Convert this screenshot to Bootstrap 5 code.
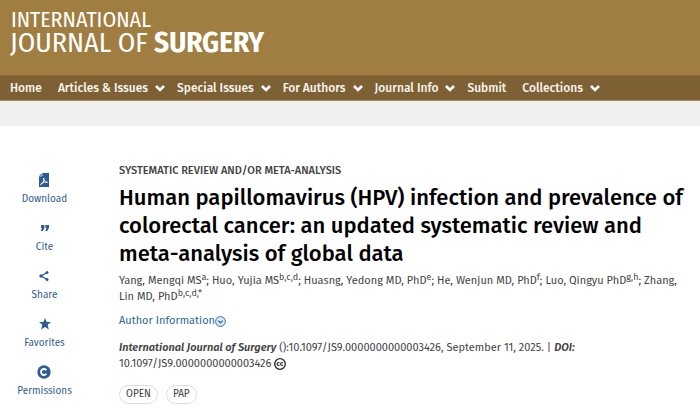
<!DOCTYPE html>
<html lang="en">
<head>
<meta charset="utf-8">
<meta name="viewport" content="width=device-width, initial-scale=1">
<title>International Journal of Surgery</title>
<link href="https://cdn.jsdelivr.net/npm/bootstrap@5.3.0/dist/css/bootstrap.min.css" rel="stylesheet">
<style>
  body { font-family: "Fira Sans", "Noto Sans", Roboto, sans-serif; font-size: 11px; line-height: 16px; color: #444; background: #fff; }
  a { color: #2d6896; text-decoration: none; }
  .masthead { background: #a07d41; padding: 10px 10px 20px; }
  .brand { color: #fff; font-family: "Fira Sans Condensed", "Open Sans Condensed", "Fira Sans", sans-serif; font-weight: 400; }
  .brand:hover { color: #fff; }
  .brand-top { font-size: 22px; line-height: 20px; padding-left: 1px; }
  .brand-main { font-size: 28px; line-height: 25px; }
  .brand-main strong { font-size: 29px; font-weight: 700; }
  .site-nav { background: #7d6033; border-top: 1px solid #8c6b38; border-bottom: 1px solid #a38a60; padding: 0 10px; }
  .site-nav ul { column-gap: 16px; }
  .site-nav .has-menu { margin-right: -4px; }
  .site-nav a, .site-nav button { color: #f8f5ee; font-size: 12px; font-weight: 500; line-height: 24px; }
  .site-nav a { display: block; }
  .site-nav button { column-gap: 7px; }
  .ad-strip { background: #efefef; height: 25px; }
  .tools { width: 89px; padding-top: 46px; }
  .tools ul { gap: 12px; }
  .tools button { color: #2f5d93; font-size: 10px; line-height: 18px; }
  .tools svg { fill: #2f5d93; height: 18px; }
  .article { padding: 37px 14px 0 30px; }
  .kicker { font-size: 11px; font-weight: 500; line-height: 16px; }
  .headline { font-size: 22px; font-weight: 500; line-height: 28px; color: #000; margin: 5px 0; }
  .authors { margin-bottom: 8px; }
  .citation { margin: 11px 0 13px; }
  .prose sup { font-size: 9px; line-height: 1; top: -4px; vertical-align: baseline; }
  .prose strong { font-weight: 600; }
  .access { border: 1px solid #ddd; font-size: 10px; line-height: 17px; padding: 0 6px; }
</style>
<script src="https://cdn.jsdelivr.net/npm/bootstrap@5.3.0/dist/js/bootstrap.bundle.min.js"></script>
</head>
<body>
<header>
  <div class="masthead">
    <a class="brand d-block" href="#"><span class="brand-top d-block">INTERNATIONAL</span><span class="brand-main d-block">JOURNAL OF <strong>SURGERY</strong></span></a>
  </div>
  <nav class="site-nav" aria-label="Main">
    <ul class="list-unstyled d-flex flex-wrap m-0">
      <li><a href="#">Home</a></li>
      <li class="has-menu"><button class="border-0 bg-transparent p-0 d-flex align-items-center" type="button">Articles &amp; Issues <svg width="10" height="7" viewBox="0 0 10 7" fill="none" stroke="#fff" stroke-width="2.5" aria-hidden="true"><path d="M1 1l4 4 4-4"/></svg></button></li>
      <li class="has-menu"><button class="border-0 bg-transparent p-0 d-flex align-items-center" type="button">Special Issues <svg width="10" height="7" viewBox="0 0 10 7" fill="none" stroke="#fff" stroke-width="2.5" aria-hidden="true"><path d="M1 1l4 4 4-4"/></svg></button></li>
      <li class="has-menu"><button class="border-0 bg-transparent p-0 d-flex align-items-center" type="button">For Authors <svg width="10" height="7" viewBox="0 0 10 7" fill="none" stroke="#fff" stroke-width="2.5" aria-hidden="true"><path d="M1 1l4 4 4-4"/></svg></button></li>
      <li class="has-menu"><button class="border-0 bg-transparent p-0 d-flex align-items-center" type="button">Journal Info <svg width="10" height="7" viewBox="0 0 10 7" fill="none" stroke="#fff" stroke-width="2.5" aria-hidden="true"><path d="M1 1l4 4 4-4"/></svg></button></li>
      <li><a href="#">Submit</a></li>
      <li><button class="border-0 bg-transparent p-0 d-flex align-items-center" type="button">Collections <svg width="10" height="7" viewBox="0 0 10 7" fill="none" stroke="#fff" stroke-width="2.5" aria-hidden="true"><path d="M1 1l4 4 4-4"/></svg></button></li>
    </ul>
  </nav>
  <div class="ad-strip"></div>
</header>
<div class="d-flex">
  <aside class="tools flex-shrink-0" aria-label="Article tools">
    <ul class="list-unstyled d-flex flex-column align-items-center m-0">
      <li><button class="border-0 bg-transparent p-0 d-flex flex-column align-items-center" type="button"><svg width="12" viewBox="0 0 12 18" aria-hidden="true"><path d="M4 1h7v14H1V4z"/><path d="M1 4h3V1" fill="none" stroke="#fff" stroke-width=".7"/><path d="M5.600 6c1 2.400-.9 5.300-3 6.800-.4-1.600 4.600-3.500 7-2.500-1 1.200-3.800-1.300-4-4.300z" fill="none" stroke="#fff" stroke-width=".9"/></svg>Download</button></li>
      <li><button class="border-0 bg-transparent p-0 d-flex flex-column align-items-center" type="button"><svg width="10" viewBox="0 0 10 18" aria-hidden="true"><path d="M1 5h3.500v3L2.800 11H.8L2 8H1zM5.500 5H9v3l-1.700 3h-2l1.200-3h-1z"/></svg>Cite</button></li>
      <li><button class="border-0 bg-transparent p-0 d-flex flex-column align-items-center" type="button"><svg width="10" viewBox="0 0 10 18" aria-hidden="true"><path d="M8 4.500L2 8l6 3.500" fill="none" stroke="#2f5d93" stroke-width="1.300"/><circle cx="8" cy="4.500" r="1.500"/><circle cx="2" cy="8" r="1.700"/><circle cx="8" cy="11.500" r="1.500"/></svg>Share</button></li>
      <li><button class="border-0 bg-transparent p-0 d-flex flex-column align-items-center" type="button"><svg width="12" viewBox="0 0 12 18" aria-hidden="true"><path d="M6 2l1.700 4H12L8.700 8.700 9.800 13.500 6 11l-3.800 2.500 1.100-4.800L0 6h4.300z"/></svg>Favorites</button></li>
      <li><button class="border-0 bg-transparent p-0 d-flex flex-column align-items-center" type="button"><svg width="14" viewBox="0 0 14 18" aria-hidden="true"><circle cx="7" cy="8" r="6.700"/><path d="M9.400 6.200a3 3 0 1 0 0 3.600" fill="none" stroke="#fff" stroke-width="1.800"/></svg>Permissions</button></li>
    </ul>
  </aside>
  <main class="article flex-grow-1">
    <div class="kicker">SYSTEMATIC REVIEW AND/OR META-ANALYSIS</div>
    <h1 class="headline">Human papillomavirus (HPV) infection and prevalence of colorectal cancer: an updated systematic review and meta-analysis of global data</h1>
    <p class="prose authors">Yang, Mengqi MS<sup>a</sup>; Huo, Yujia MS<sup>b,c,d</sup>; Huasng, Yedong MD, PhD<sup>e</sup>; He, Wenjun MD, PhD<sup>f</sup>; Luo, Qingyu PhD<sup>g,h</sup>; Zhang, Lin MD, PhD<sup>b,c,d,*</sup></p>
    <a class="d-inline-flex align-items-center" href="#">Author Information<svg width="11" height="11" viewBox="0 0 11 11" fill="#dce8f6" stroke="#3f6da5" aria-hidden="true"><circle cx="5.500" cy="5.500" r="4.900"/><path d="M3.200 4.600l2.300 2.200 2.300-2.200" fill="none" stroke-width="1.300"/></svg></a>
    <p class="prose citation"><strong><em>International Journal of Surgery</em></strong> ():10.1097/JS9.0000000000003426, September 11, 2025. | <strong><em>DOI:</em></strong> 10.1097/JS9.0000000000003426 <svg width="12" height="12" viewBox="0 0 12 12" fill="none" stroke="#222" aria-hidden="true"><circle cx="6" cy="6" r="5.300" stroke-width="1.300"/><path d="M5.400 5a1.400 1.400 0 1 0 0 2M8.900 5a1.400 1.400 0 1 0 0 2" stroke-width="1.100"/></svg></p>
    <div class="d-flex gap-2"><span class="access rounded-pill">OPEN</span><span class="access rounded-pill">PAP</span></div>
  </main>
</div>
</body>
</html>
